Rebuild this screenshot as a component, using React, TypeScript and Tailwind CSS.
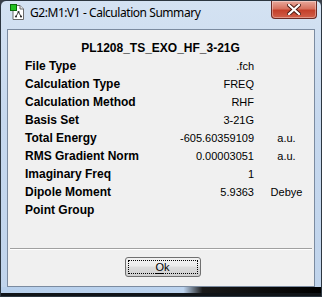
import React from "react";

const rows: { label: string; value: string; unit?: string }[] = [
  { label: "File Type", value: ".fch" },
  { label: "Calculation Type", value: "FREQ" },
  { label: "Calculation Method", value: "RHF" },
  { label: "Basis Set", value: "3-21G" },
  { label: "Total Energy", value: "-605.60359109", unit: "a.u." },
  { label: "RMS Gradient Norm", value: "0.00003051", unit: "a.u." },
  { label: "Imaginary Freq", value: "1" },
  { label: "Dipole Moment", value: "5.9363", unit: "Debye" },
  { label: "Point Group", value: "" },
];

function AppIcon() {
  return (
    <svg width="14" height="16" viewBox="0 0 14 16" className="shrink-0">
      <path d="M3 1.5 H10 L13.5 5 V15.5 H3 Z" fill="#ffffff" stroke="#6a6a6a" strokeWidth="1" />
      <path d="M10 1.5 V5 H13.5" fill="#e8e8e8" stroke="#6a6a6a" strokeWidth="1" />
      <rect x="0.5" y="0.5" width="6" height="6" fill="#22c022" stroke="#0a6a0a" strokeWidth="1" />
      <circle cx="8.5" cy="8" r="1.1" fill="#333" />
      <circle cx="6" cy="12.5" r="1.1" fill="#333" />
      <circle cx="11" cy="12.5" r="1.1" fill="#333" />
      <path d="M8.5 8 L6 12.5 M8.5 8 L11 12.5" stroke="#333" strokeWidth="0.9" />
    </svg>
  );
}

function CloseButton() {
  return (
    <div className="ml-auto mr-[4px] self-start w-[46px] h-[18px] rounded-b-[4px] border border-t-0 border-[#6b2a24] bg-[linear-gradient(to_bottom,#e9a99c_0%,#d7725f_45%,#c4402a_55%,#d1604a_100%)] flex items-center justify-center shadow-[inset_0_0_0_1px_rgba(255,255,255,0.35)]">
      <svg width="14" height="11" viewBox="0 0 14 11">
        <path d="M2 1 L12 10 M12 1 L2 10" stroke="#4a1810" strokeWidth="4" strokeLinecap="square" />
        <path d="M2 1 L12 10 M12 1 L2 10" stroke="#ffffff" strokeWidth="2.2" strokeLinecap="square" />
      </svg>
    </div>
  );
}

export default function App() {
  return (
    <div className="w-[322px] h-[297px] bg-[#3a4048]">
      <div className="w-[322px] h-[297px] flex flex-col rounded-t-[6px] border border-[#2c3640] bg-[linear-gradient(to_bottom,#d4e2f2_0%,#c6d8ee_40%,#c0d4ec_100%)] overflow-hidden">
        <div className="h-[28px] flex items-start pl-[9px] shrink-0">
          <div className="mt-[3px]">
            <AppIcon />
          </div>
          <span
            className="ml-[6px] mt-[4px] text-[12px] leading-[16px] tracking-[-0.45px] text-black"
            style={{ fontFamily: '"Segoe UI", "Noto Sans", sans-serif' }}
          >
            G2:M1:V1 - Calculation Summary
          </span>
          <CloseButton />
        </div>
        <div className="mx-[6px] h-[258px] shrink-0 border border-[#7b8ba0] bg-[#f0f0f0] flex flex-col">
          <div
            className="pt-[9px] text-black"
            style={{ fontFamily: '"Liberation Sans", Arial, sans-serif' }}
          >
            <div className="h-[18px] flex items-center justify-center text-[12px] font-bold pr-[1px]">
              PL1208_TS_EXO_HF_3-21G
            </div>
            {rows.map((r) => (
              <div key={r.label} className="h-[18px] flex items-center">
                <div className="pl-[17px] w-[130px] text-[12px] font-bold whitespace-nowrap">{r.label}</div>
                <div className="w-[116px] text-right text-[11px]">{r.value}</div>
                <div className="flex-1 text-center text-[11px] pl-[5px]">{r.unit ?? ""}</div>
              </div>
            ))}
          </div>
          <div className="mt-[29px] mx-[2px] h-[2px] border-t border-[#a0a0a0] border-b border-b-white" />
          <div className="flex justify-center mt-[7px] pl-[3px]">
            <div
              className="w-[76px] h-[20px] rounded-[3px] border border-[#707070] bg-[linear-gradient(to_bottom,#f2f2f2_0%,#ebebeb_45%,#dddddd_50%,#cfcfcf_100%)] p-[2px]"
              style={{ fontFamily: '"Liberation Sans", Arial, sans-serif' }}
            >
              <div className="w-full h-full border border-dotted border-black flex items-center justify-center text-[11px] leading-none text-black">
                <span>
                  <span className="underline underline-offset-[2px]">O</span>k
                </span>
              </div>
            </div>
          </div>
        </div>
        <div className="flex-1 bg-[linear-gradient(to_right,#b8d0ec_0%,#bcd3ee_57%,#1a1a1a_63%,#000000_100%)] border-b-[3px] border-[#101418]" />
      </div>
    </div>
  );
}
